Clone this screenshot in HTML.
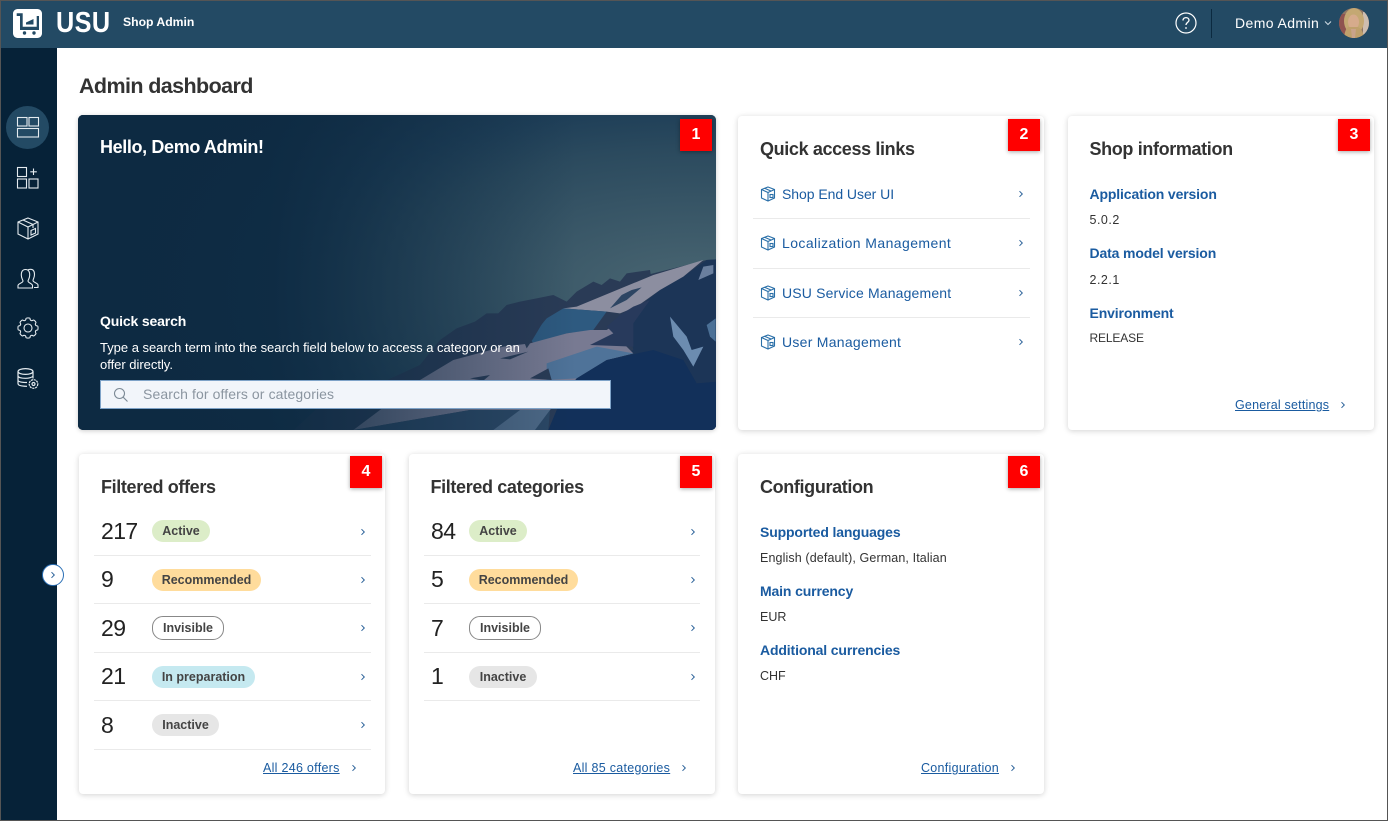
<!DOCTYPE html>
<html><head><meta charset="utf-8"><title>Admin dashboard</title>
<style>
html,body{margin:0;padding:0}
body{width:1388px;height:821px;overflow:hidden;position:relative;background:#fff;font-family:"Liberation Sans",sans-serif;color:#333}
#frame{position:absolute;left:0;top:0;width:1386px;height:819px;border:1px solid #555;z-index:50;pointer-events:none}
.a{position:absolute}
.t{position:absolute;white-space:nowrap;line-height:20px}
#hdr{left:0;top:0;width:1388px;height:48px;background:#234a64}
#side{left:0;top:48px;width:57px;height:773px;background:#062238}
.card{position:absolute;background:#fff;border-radius:4px;box-shadow:0 1px 6px rgba(0,0,0,.18)}
.num{position:absolute;width:32px;height:32px;background:#f00;color:#fff;font-weight:bold;font-size:16px;line-height:32px;text-align:center;box-shadow:0 1px 4px rgba(0,0,0,.35);z-index:5}
.h{font-size:18px;font-weight:bold;color:#333;letter-spacing:-.36px}
.lbl{font-size:14px;font-weight:bold;color:#1a5ba0;letter-spacing:-.14px}
.val{font-size:12.5px;color:#333}
.lnk{font-size:14px;color:#1a5ba0}
.f{font-size:12.5px;color:#1a5ba0;text-decoration:underline;letter-spacing:.28px}
.sep{position:absolute;height:1px;background:#eaeaea}
.n{position:absolute;font-size:23px;color:#222;line-height:28px;white-space:nowrap;letter-spacing:-.6px}
.b{position:absolute;height:22px;border-radius:11px;font-size:12.5px;font-weight:bold;line-height:22px;text-align:center;color:#444;box-sizing:border-box;white-space:nowrap}
.g{background:#dcedc8}.o{background:#ffdc9c}.w{background:#fff;border:1px solid #888;line-height:23px}.c{background:#c5e9f0}.y{background:#e6e6e6}
svg.i{position:absolute;overflow:visible}
</style></head><body>
<svg width="0" height="0" style="position:absolute">
<defs>
<symbol id="chev" viewBox="0 0 6 8"><path d="M1.500 1.200L4.300 4L1.500 6.800" fill="none" stroke="#2a6199" stroke-width="1"/></symbol>
<symbol id="box" viewBox="0 0 16 16"><g fill="none" stroke="#2a6fa8" stroke-width="1.100"><path d="M8 1L14.500 3.500V12L8 15L1.500 12V3.500Z"/><path d="M1.500 3.500L8 6.500L14.500 3.500M8 6.500V15M4.500 2.200L11 5"/><rect x="10" y="8.500" width="3" height="3"/></g></symbol>
</defs></svg>

<div id="frame"></div>
<div class="a" id="hdr"></div>
<div class="a" id="side"></div>

<!-- logo -->
<svg class="i" style="left:13px;top:9px" width="30" height="30" viewBox="0 0 30 30">
<rect width="29" height="29" rx="4.500" fill="#fff"/>
<path d="M3.700 4.300H9.700V17.700H23.700V7H26V21H7V7H3.700Z" fill="#234a64"/>
<path d="M13 15.500L13 13.500L20.500 10V15.500Z" fill="#234a64"/>
<circle cx="11.500" cy="24" r="1.700" fill="#234a64"/><circle cx="21" cy="24" r="1.700" fill="#234a64"/>
</svg>
<div class="t" style="left:56px;top:8px;font-size:29px;line-height:30px;font-weight:bold;color:#fff;letter-spacing:.5px;transform:scaleX(.87);transform-origin:left center">USU</div>
<div class="t" style="left:123px;top:12px;font-size:12.200px;font-weight:bold;color:#fff">Shop Admin</div>

<svg class="i" style="left:1175px;top:12px" width="22" height="22" viewBox="0 0 22 22"><circle cx="11" cy="11" r="10" fill="none" stroke="#fff" stroke-width="1.200"/><path d="M8 8.500C8 6.500 9.500 5.600 11 5.600C12.700 5.600 14 6.700 14 8.200C14 10.300 11 10.500 11 13" fill="none" stroke="#fff" stroke-width="1.300"/><circle cx="11" cy="16" r=".9" fill="#fff"/></svg>
<div class="a" style="left:1211px;top:9px;width:1px;height:29px;background:#0b2a40"></div>
<div class="t" style="left:1235px;top:13px;font-size:14px;color:#fff;letter-spacing:.4px">Demo Admin</div>
<svg class="i" style="left:1324px;top:20px" width="8" height="6" viewBox="0 0 8 6"><path d="M1 1.500L4 4.500L7 1.500" fill="none" stroke="#cfdbe3" stroke-width="1"/></svg>
<svg class="i" style="left:1339px;top:8px" width="30" height="30" viewBox="0 0 30 30"><defs><clipPath id="av"><circle cx="15" cy="15" r="15"/></clipPath></defs><g clip-path="url(#av)"><rect width="30" height="30" fill="#8d7565"/><rect x="0" y="6" width="7" height="24" fill="#8f5350"/><rect x="24" y="4" width="6" height="26" fill="#cdbdb0"/><ellipse cx="15" cy="13" rx="10" ry="13" fill="#c4a873"/><ellipse cx="14.500" cy="14" rx="5.500" ry="7.500" fill="#d6ab8c"/><path d="M5 30C6 20 9 19 10 19L19 19C21 20 24 22 25 30Z" fill="#bfa06c"/><path d="M12 21L17 21L16 30L13 30Z" fill="#caa38a"/></g></svg>

<!-- sidebar -->
<div class="a" style="left:6px;top:106px;width:43px;height:43px;border-radius:50%;background:#234a64"></div>
<svg class="i" style="left:17px;top:117px" width="22" height="21" viewBox="0 0 22 21" fill="none" stroke="#e4ebef" stroke-width="1.100"><rect x=".5" y=".5" width="9.500" height="8.500"/><rect x="12" y=".5" width="9.500" height="8.500"/><rect x=".5" y="11.500" width="21" height="8.500"/></svg>
<svg class="i" style="left:17px;top:167px" width="22" height="22" viewBox="0 0 22 22" fill="none" stroke="#e4ebef" stroke-width="1.100"><rect x=".5" y=".5" width="9" height="9"/><rect x=".5" y="12" width="9" height="9"/><rect x="12" y="12" width="9" height="9"/><path d="M16.500 1.500V8M13.300 4.800H19.800"/></svg>
<svg class="i" style="left:17px;top:217px" width="22" height="23" viewBox="0 0 22 23" fill="none" stroke="#e4ebef" stroke-width="1.100"><path d="M11 1L21 5V17L11 22L1 17V5Z"/><path d="M1 5L11 10L21 5M11 10V22M6 3L16 7.500V11"/><path d="M14 13.500L18.500 11.500V16L14 18Z"/></svg>
<svg class="i" style="left:17px;top:268px" width="22" height="21" viewBox="0 0 22 21" fill="none" stroke="#e4ebef" stroke-width="1.100"><path d="M1 20V17.500C1 15.500 6 15 6 13C6 12 4.300 10.500 4.300 7C4.300 3 6 1.500 8.500 1.500C11 1.500 12.700 3 12.700 7C12.700 10.500 11 12 11 13C11 15 15.500 15.500 15.500 17.500V20Z"/><path d="M10.800 2C11.700 1.300 12.500 1.300 13.500 1.300C16 1.300 17.500 3 17.500 6.500C17.500 10 16 11 16 12.500C16 14.500 21 15 21 17V19.500H17"/></svg>
<svg class="i" style="left:17px;top:317px" width="22" height="22" viewBox="0 0 22 22" fill="none" stroke="#e4ebef" stroke-width="1.100"><circle cx="11" cy="11" r="4"/><path d="M9 1.500C9 .8 13 .8 13 1.500C13 3.500 14.800 4.300 16.200 3.100C16.800 2.600 19.400 5.200 18.900 5.800C17.700 7.200 18.500 9 20.500 9C21.200 9 21.200 13 20.500 13C18.500 13 17.700 14.800 18.900 16.200C19.400 16.800 16.800 19.400 16.200 18.900C14.800 17.700 13 18.500 13 20.500C13 21.200 9 21.200 9 20.500C9 18.500 7.200 17.700 5.800 18.900C5.200 19.400 2.600 16.800 3.100 16.200C4.300 14.800 3.500 13 1.500 13C.8 13 .8 9 1.500 9C3.500 9 4.300 7.200 3.100 5.800C2.600 5.200 5.200 2.600 5.800 3.100C7.200 4.300 9 3.500 9 1.500Z"/></svg>
<svg class="i" style="left:17px;top:368px" width="22" height="22" viewBox="0 0 22 22" fill="none" stroke="#e4ebef" stroke-width="1.200"><ellipse cx="8.500" cy="3.500" rx="7.500" ry="2.900"/><path d="M1 3.500V15.500C1 17.300 4 18.300 10 18.300M16 3.500V10.500M1 7.800C1 9.500 4.500 10.300 8.500 10.300C11 10.300 14 9.800 16 8.300M1 12C1 13.700 4.500 14.500 10 14.500"/><circle cx="16.500" cy="16" r="4.300" stroke-dasharray="2.200 .7"/><circle cx="16.500" cy="16" r="1.500"/></svg>

<div class="a" style="left:42px;top:564px;width:20px;height:20px;border-radius:50%;background:#fff;border:1.500px solid #2a6fb5;z-index:6"></div>
<svg class="i" style="left:50px;top:571px;z-index:7" width="6" height="8"><use href="#chev"/></svg>

<div class="t" style="left:79px;top:73px;font-size:21.500px;line-height:26px;font-weight:bold;color:#333;letter-spacing:-.6px">Admin dashboard</div>

<!-- hero -->
<div class="a" style="left:78px;top:115px;width:638px;height:315px;border-radius:5px;overflow:hidden;box-shadow:0 1px 5px rgba(0,0,0,.2)">
<svg class="a" style="left:0;top:0" width="638" height="315" viewBox="78 115 638 315">
<defs>
<radialGradient id="sky" gradientUnits="userSpaceOnUse" cx="0" cy="0" r="1" gradientTransform="translate(690 290) scale(620 270)"><stop offset="0" stop-color="#4a6672"/><stop offset=".52" stop-color="#2b4a5e"/><stop offset=".67" stop-color="#1f3f58"/><stop offset="1" stop-color="#102b44"/></radialGradient>
<linearGradient id="fade" gradientUnits="userSpaceOnUse" x1="78" x2="716" y1="0" y2="0"><stop offset="0" stop-color="#0d2a42" stop-opacity="1"/><stop offset=".3" stop-color="#0d2a42" stop-opacity=".9"/><stop offset=".55" stop-color="#0d2a42" stop-opacity=".42"/><stop offset=".78" stop-color="#0d2a42" stop-opacity="0"/></linearGradient>
</defs>
<rect x="78" y="115" width="638" height="315" fill="#0f2b42"/>
<rect x="78" y="115" width="638" height="315" fill="url(#sky)"/>
<g transform="translate(420 250) scale(.33333)">
<path d="M-400 560L-250 420L-120 400L0 345L60 270L110 235L165 215L200 190L235 190L260 165L300 155L350 145L400 135L440 155L470 125L520 95L545 105L570 85L600 95L620 70L690 60L692 72L860 30L890 28V540H-400Z" fill="#2a3b56"/>
<path d="M860 30L890 28V540H390L470 380L560 330L640 300L620 200L720 120L790 80Z" fill="#1c3557"/>
<path d="M470 170L700 75L850 30L790 80L720 120L650 170L600 190L560 185L430 175Z" fill="#8c8ea0"/>
<path d="M570 175L605 135L635 120L665 112L620 150Z" fill="#2d4563"/>
<path d="M430 175L560 185L520 240L440 250L340 280L330 265L380 205Z" fill="#2e5a80"/>
<path d="M-200 540L0 390L100 330L250 290L330 280L440 250L510 240L560 240L620 200L650 170L590 260L640 310L560 330L470 385L390 480L150 480Z" fill="#787a92"/>
<path d="M380 340L530 290L640 310L560 330L470 385L380 390Z" fill="#4f7399"/>
<path d="M560 230L600 195L640 170L690 150L640 220L640 290L510 285L580 250Z" fill="#283a5c"/>
<path d="M240 325L325 305L270 328Z" fill="#2a3b56"/>
<path d="M150 385L210 375L190 392Z" fill="#2a3b56"/>
<path d="M330 385L385 355L395 390Z" fill="#2a3b56"/>
<path d="M310 270L370 215L340 265L320 295Z" fill="#2a3b56"/>
<path d="M750 200L800 260L815 300L850 290L820 350L790 300L760 260Z" fill="#6c8cb0"/>
<path d="M850 50L880 45V70L835 90Z" fill="#6a7f9e"/>
<path d="M860 225L887 205V275L870 260Z" fill="#4b7096"/>
<path d="M385 540L410 480L470 385L560 330L700 300L790 330L830 400L890 395V540Z" fill="#12305a"/>
<path d="M-200 540L150 480L390 480L385 540Z" fill="#2c4866"/>
<path d="M220 540L300 480L390 480L345 540Z" fill="#4f6a88"/>
</g>
<rect x="78" y="115" width="638" height="315" fill="url(#fade)"/>
</svg>
</div>
<div class="num" style="left:680px;top:119px">1</div>
<div class="t" style="left:100px;top:137px;font-size:18px;font-weight:bold;color:#fff;letter-spacing:-.37px">Hello, Demo Admin!</div>
<div class="t" style="left:100px;top:311px;font-size:14px;font-weight:bold;color:#fff;letter-spacing:-.15px">Quick search</div>
<div class="t" style="left:100px;top:339px;font-size:13px;line-height:17px;color:#fff;letter-spacing:-.02px;white-space:normal;width:440px">Type a search term into the search field below to access a category or an offer directly.</div>
<div class="a" style="left:100px;top:380px;width:509px;height:27px;background:#f2f5fa;border:1px solid #7fa3c8"></div>
<svg class="i" style="left:113px;top:387px" width="16" height="16" viewBox="0 0 16 16" fill="none" stroke="#7d8a96" stroke-width="1.100"><circle cx="6.500" cy="6.500" r="5"/><path d="M10.200 10.200L14.500 14.500"/></svg>
<div class="t" style="left:143px;top:384px;font-size:14px;color:#8b95a0;letter-spacing:.1px">Search for offers or categories</div>

<!-- quick access -->
<div class="card" style="left:738px;top:116px;width:306px;height:314px"></div>
<div class="num" style="left:1008px;top:119px">2</div>
<div class="t h" style="left:760px;top:139px">Quick access links</div>
<svg class="i" style="left:760px;top:186px" width="16" height="16"><use href="#box"/></svg>
<div class="t lnk" style="left:782px;top:184px;letter-spacing:-.05px">Shop End User UI</div>
<svg class="i" style="left:1018px;top:190px" width="6" height="8"><use href="#chev"/></svg>
<div class="sep" style="left:753px;top:218px;width:277px"></div>
<svg class="i" style="left:760px;top:235px" width="16" height="16"><use href="#box"/></svg>
<div class="t lnk" style="left:782px;top:233px;letter-spacing:.42px">Localization Management</div>
<svg class="i" style="left:1018px;top:239px" width="6" height="8"><use href="#chev"/></svg>
<div class="sep" style="left:753px;top:268px;width:277px"></div>
<svg class="i" style="left:760px;top:285px" width="16" height="16"><use href="#box"/></svg>
<div class="t lnk" style="left:782px;top:283px;letter-spacing:.16px">USU Service Management</div>
<svg class="i" style="left:1018px;top:289px" width="6" height="8"><use href="#chev"/></svg>
<div class="sep" style="left:753px;top:317px;width:277px"></div>
<svg class="i" style="left:760px;top:334px" width="16" height="16"><use href="#box"/></svg>
<div class="t lnk" style="left:782px;top:332px;letter-spacing:.27px">User Management</div>
<svg class="i" style="left:1018px;top:338px" width="6" height="8"><use href="#chev"/></svg>

<!-- shop info -->
<div class="card" style="left:1068px;top:116px;width:306px;height:314px"></div>
<div class="num" style="left:1338px;top:119px">3</div>
<div class="t h" style="left:1089.500px;top:139px">Shop information</div>
<div class="t lbl" style="left:1089.500px;top:184px">Application version</div>
<div class="t val" style="left:1089.500px;top:210px;letter-spacing:.5px">5.0.2</div>
<div class="t lbl" style="left:1089.500px;top:243px">Data model version</div>
<div class="t val" style="left:1089.500px;top:270px;letter-spacing:.5px">2.2.1</div>
<div class="t lbl" style="left:1089.500px;top:303px">Environment</div>
<div class="t val" style="left:1089.500px;top:328px;font-size:12px;letter-spacing:-.15px">RELEASE</div>
<div class="t f" style="left:1235px;top:395px;letter-spacing:.2px">General settings</div>
<svg class="i" style="left:1340px;top:401px" width="6" height="8"><use href="#chev"/></svg>

<!-- filtered offers -->
<div class="card" style="left:79px;top:454px;width:306px;height:340px"></div>
<div class="num" style="left:350px;top:456px">4</div>
<div class="t h" style="left:101px;top:477px">Filtered offers</div>
<div class="n" style="left:101px;top:517px">217</div><div class="b g" style="left:152px;top:520px;width:58px">Active</div>
<svg class="i" style="left:360px;top:528px" width="6" height="8"><use href="#chev"/></svg>
<div class="sep" style="left:94px;top:555px;width:277px"></div>
<div class="n" style="left:101px;top:565px">9</div><div class="b o" style="left:152px;top:569px;width:109px">Recommended</div>
<svg class="i" style="left:360px;top:576px" width="6" height="8"><use href="#chev"/></svg>
<div class="sep" style="left:94px;top:603px;width:277px"></div>
<div class="n" style="left:101px;top:614px">29</div><div class="b w" style="left:152px;top:616px;width:72px;height:24px">Invisible</div>
<svg class="i" style="left:360px;top:624px" width="6" height="8"><use href="#chev"/></svg>
<div class="sep" style="left:94px;top:652px;width:277px"></div>
<div class="n" style="left:101px;top:662px">21</div><div class="b c" style="left:152px;top:666px;width:103px">In preparation</div>
<svg class="i" style="left:360px;top:673px" width="6" height="8"><use href="#chev"/></svg>
<div class="sep" style="left:94px;top:700px;width:277px"></div>
<div class="n" style="left:101px;top:711px">8</div><div class="b y" style="left:152px;top:714px;width:67px">Inactive</div>
<svg class="i" style="left:360px;top:721px" width="6" height="8"><use href="#chev"/></svg>
<div class="sep" style="left:94px;top:749px;width:277px"></div>
<div class="t f" style="left:263px;top:758px">All 246 offers</div>
<svg class="i" style="left:351px;top:764px" width="6" height="8"><use href="#chev"/></svg>

<!-- filtered categories -->
<div class="card" style="left:409px;top:454px;width:306px;height:340px"></div>
<div class="num" style="left:680px;top:456px">5</div>
<div class="t h" style="left:430.500px;top:477px">Filtered categories</div>
<div class="n" style="left:431px;top:517px">84</div><div class="b g" style="left:469px;top:520px;width:58px">Active</div>
<svg class="i" style="left:690px;top:528px" width="6" height="8"><use href="#chev"/></svg>
<div class="sep" style="left:424px;top:555px;width:276px"></div>
<div class="n" style="left:431px;top:565px">5</div><div class="b o" style="left:469px;top:569px;width:109px">Recommended</div>
<svg class="i" style="left:690px;top:576px" width="6" height="8"><use href="#chev"/></svg>
<div class="sep" style="left:424px;top:603px;width:276px"></div>
<div class="n" style="left:431px;top:614px">7</div><div class="b w" style="left:469px;top:616px;width:72px;height:24px">Invisible</div>
<svg class="i" style="left:690px;top:624px" width="6" height="8"><use href="#chev"/></svg>
<div class="sep" style="left:424px;top:652px;width:276px"></div>
<div class="n" style="left:431px;top:662px">1</div><div class="b y" style="left:469px;top:666px;width:68px">Inactive</div>
<svg class="i" style="left:690px;top:673px" width="6" height="8"><use href="#chev"/></svg>
<div class="sep" style="left:424px;top:700px;width:276px"></div>
<div class="t f" style="left:573px;top:758px">All 85 categories</div>
<svg class="i" style="left:681px;top:764px" width="6" height="8"><use href="#chev"/></svg>

<!-- configuration -->
<div class="card" style="left:738px;top:454px;width:306px;height:340px"></div>
<div class="num" style="left:1008px;top:456px">6</div>
<div class="t h" style="left:760px;top:477px">Configuration</div>
<div class="t lbl" style="left:760px;top:522px">Supported languages</div>
<div class="t val" style="left:760px;top:548px;letter-spacing:.12px">English (default), German, Italian</div>
<div class="t lbl" style="left:760px;top:581px">Main currency</div>
<div class="t val" style="left:760px;top:607px">EUR</div>
<div class="t lbl" style="left:760px;top:640px">Additional currencies</div>
<div class="t val" style="left:760px;top:666px">CHF</div>
<div class="t f" style="left:921px;top:758px">Configuration</div>
<svg class="i" style="left:1010px;top:764px" width="6" height="8"><use href="#chev"/></svg>
</body></html>
